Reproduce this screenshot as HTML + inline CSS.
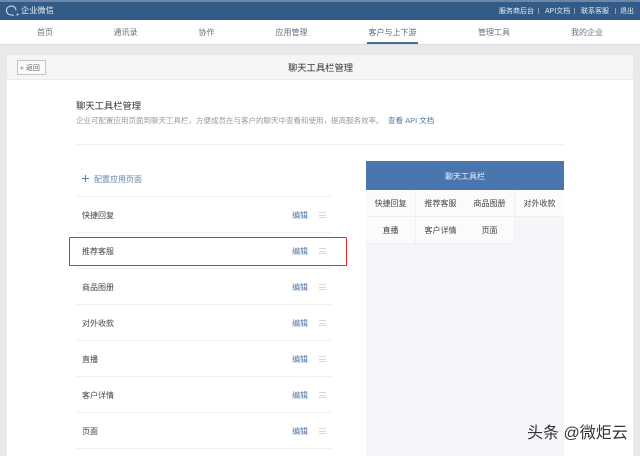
<!DOCTYPE html>
<html lang="zh">
<head>
<meta charset="utf-8">
<style>
html,body{margin:0;padding:0}
body{width:640px;height:456px;overflow:hidden;position:relative;background:#e8e9eb;font-family:"Liberation Sans","Noto Sans CJK SC",sans-serif;color:#555}
#w{position:absolute;left:0;top:0;width:640px;height:456px;filter:blur(.3px)}
.a{position:absolute;white-space:nowrap;line-height:12px}
.b{position:absolute}
.c{text-align:center;transform:translateX(-50%)}
.n{font-size:8px;color:#66727f;top:27px}
.t{font-size:7px;color:#e8eef5;top:6px}
.r{font-size:8px;color:#444;left:82px}
.e{font-size:8px;color:#4f759f;left:292px}
.l{left:76px;width:256px;height:1px;background:#f1f1f1}
.g{left:319px;width:7px;height:6px;border-top:1px solid #d8d8d8;border-bottom:1px solid #d8d8d8;box-sizing:border-box}
.g:after{content:"";position:absolute;left:0;right:0;top:1.5px;height:1px;background:#d8d8d8}
.k{width:49px;height:26px;background:#fbfbfb;border-right:1px solid #f0f0f2;border-bottom:1px solid #eeeef2;font-size:8px;color:#444;text-align:center;line-height:27px}
</style>
</head>
<body>
<div id="w">
<div class="b" style="left:0;top:0;width:640px;height:2px;background:#6f87a6"></div>
<div class="b" style="left:0;top:2px;width:640px;height:18px;background:#335b88"></div>
<svg class="b" style="left:5px;top:5px" width="16" height="12" viewBox="0 0 16 12"><path d="M6.500 1C3.500 1 1.500 3 1.500 5.500C1.500 8 3.500 10 6.500 10C7.500 10 8 9.800 8.800 10.600M11 5.500C11 3 9.300 1 6.500 1" fill="none" stroke="#dfe7f0" stroke-width="1"/><circle cx="12.500" cy="9.500" r="1" fill="#dfe7f0"/></svg>
<div class="a" style="left:21px;top:5px;font-size:8.200px;color:#e8eef5">企业微信</div>
<div class="a t" style="left:499px">服务商后台</div>
<div class="b" style="left:538px;top:8px;width:1px;height:6px;background:#8ba2bd"></div>
<div class="a t" style="left:545px">API文档</div>
<div class="b" style="left:574px;top:8px;width:1px;height:6px;background:#8ba2bd"></div>
<div class="a t" style="left:581px">联系客服</div>
<div class="b" style="left:615px;top:8px;width:1px;height:6px;background:#8ba2bd"></div>
<div class="a t" style="left:620px">退出</div>

<div class="b" style="left:0;top:20px;width:640px;height:24px;background:#fff;border-bottom:1px solid #dcdde0"></div>
<div class="a n c" style="left:45px">首页</div>
<div class="a n c" style="left:125.500px">通讯录</div>
<div class="a n c" style="left:206.500px">协作</div>
<div class="a n c" style="left:291.500px">应用管理</div>
<div class="a n c" style="left:392.500px;color:#566b88">客户与上下游</div>
<div class="b" style="left:367px;top:42px;width:51px;height:2px;background:#4a6b93"></div>
<div class="a n c" style="left:494px">管理工具</div>
<div class="a n c" style="left:587px">我的企业</div>

<div class="b" style="left:7px;top:55px;width:626px;height:401px;background:#fff"></div>
<div class="b" style="left:7px;top:55px;width:626px;height:24px;background:#f5f5f5;border-bottom:1px solid #ececec"></div>
<div class="b" style="left:17px;top:60px;width:27px;height:13px;background:#fafafa;border:1px solid #c4c4c4;border-radius:1px"></div>
<div class="a" style="left:20px;top:63px;font-size:7px;color:#666">«&nbsp;返回</div>
<div class="a c" style="left:320.500px;top:62px;font-size:9.300px;color:#333">聊天工具栏管理</div>

<div class="a" style="left:76px;top:100px;font-size:9.300px;color:#333">聊天工具栏管理</div>
<div class="a" style="left:76px;top:115px;font-size:7.500px;color:#999">企业可配置应用页面到聊天工具栏，方便成员在与客户的聊天中查看和使用，提高服务效率。</div>
<div class="a" style="left:388px;top:115px;font-size:7.500px;color:#4d77a5">查看 API 文档</div>
<div class="b" style="left:76px;top:144px;width:488px;height:1px;background:#f0f0f0"></div>

<svg class="b" style="left:81px;top:174px" width="9" height="9" viewBox="0 0 9 9"><path d="M4.500 1V8M1 4.500H8" stroke="#5f7f9f" stroke-width="1" fill="none"/></svg>
<div class="a" style="left:94px;top:174px;font-size:8px;color:#6487a8">配置应用页面</div>

<div class="b l" style="top:196px"></div>
<div class="a r" style="top:210px">快捷回复</div><div class="a e" style="top:210px">编辑</div><div class="b g" style="top:212px"></div>
<div class="b l" style="top:232px"></div>
<div class="a r" style="top:246px">推荐客服</div><div class="a e" style="top:246px">编辑</div><div class="b g" style="top:248px"></div>
<div class="b l" style="top:268px"></div>
<div class="a r" style="top:282px">商品图册</div><div class="a e" style="top:282px">编辑</div><div class="b g" style="top:284px"></div>
<div class="b l" style="top:304px"></div>
<div class="a r" style="top:318px">对外收款</div><div class="a e" style="top:318px">编辑</div><div class="b g" style="top:320px"></div>
<div class="b l" style="top:340px"></div>
<div class="a r" style="top:354px">直播</div><div class="a e" style="top:354px">编辑</div><div class="b g" style="top:356px"></div>
<div class="b l" style="top:376px"></div>
<div class="a r" style="top:390px">客户详情</div><div class="a e" style="top:390px">编辑</div><div class="b g" style="top:392px"></div>
<div class="b l" style="top:412px"></div>
<div class="a r" style="top:426px">页面</div><div class="a e" style="top:426px">编辑</div><div class="b g" style="top:428px"></div>
<div class="b l" style="top:448px"></div>

<div class="b" style="left:69px;top:236.500px;width:275.500px;height:27.500px;border:1.500px solid #f5231d;border-radius:1px"></div>

<div class="b" style="left:366px;top:161px;width:198px;height:295px;background:#f5f6fa"></div>
<div class="b" style="left:366px;top:161px;width:198px;height:29px;background:#4a76b0"></div>
<div class="a c" style="left:465px;top:171px;font-size:8px;color:#eef3f9">聊天工具栏</div>
<div class="b k" style="left:366px;top:190px">快捷回复</div>
<div class="b k" style="left:416px;top:190px">推荐客服</div>
<div class="b k" style="left:465px;top:190px">商品图册</div>
<div class="b k" style="left:515px;top:190px;border-right:0">对外收款</div>
<div class="b k" style="left:366px;top:217px">直播</div>
<div class="b k" style="left:416px;top:217px">客户详情</div>
<div class="b k" style="left:465px;top:217px">页面</div>

<div class="a" style="left:527px;top:426px;font-size:16px;line-height:16px;color:#333">头条 @微炬云</div>
</div>
</body>
</html>
